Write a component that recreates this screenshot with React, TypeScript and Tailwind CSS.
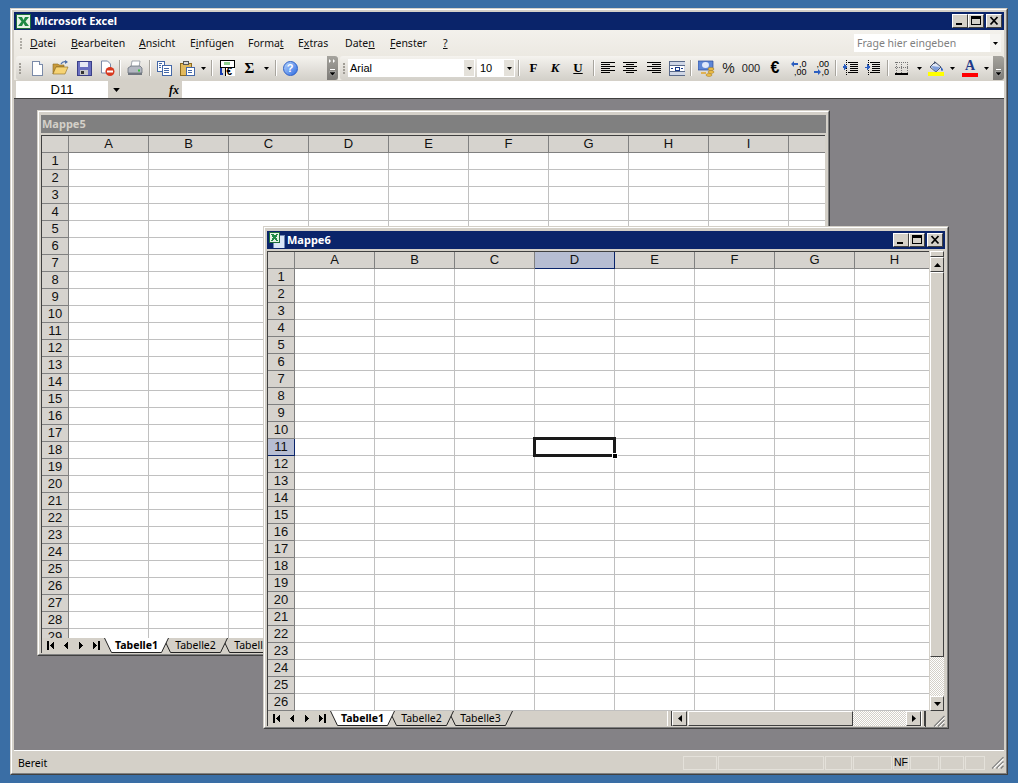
import React from 'react';

const ui = "font-['Noto_Sans','Liberation_Sans',sans-serif]";
const cellFont = "font-['Liberation_Sans',Arial,sans-serif]";
const raised = 'bg-[#d4d0c8] border border-t-white border-l-white border-r-[#404040] border-b-[#404040]';

const Arrow = ({ big }: { big?: boolean }) => (
    <svg width={big ? 7 : 5} height={big ? 4 : 3} viewBox="0 0 5 3"><path d="M0 0h5L2.5 3z" fill="#000" /></svg>
);

const Slot = ({ w, children }: { w: number; children?: React.ReactNode }) => (
    <div className="flex shrink-0 items-center justify-center" style={{ width: w }}>{children}</div>
);

const Sep = ({ w }: { w: number }) => (
    <Slot w={w}><div className="h-[16px] w-[2px] border-l border-l-[#a8a59e] border-r border-r-white" /></Slot>
);

const Grip = () => (
    <div className="flex w-[3px] flex-col gap-[1px]">
        {[0, 1, 2, 3].map(i => <div key={i} className="h-[2px] w-[2px] bg-[#a09d96]" />)}
    </div>
);

const Chevron = ({ double }: { double?: boolean }) => (
    <div className="flex h-[24px] w-[11px] flex-col items-center justify-between rounded-r-[3px] bg-gradient-to-b from-[#a5a39d] to-[#7d7b77] py-[3px]">
        <svg width="7" height="5" viewBox="0 0 7 5">{double && <path d="M0 0l2 2-2 2zM4 0l2 2-2 2z" fill="#fff" />}</svg>
        <svg width="7" height="8" viewBox="0 0 7 8"><path d="M1 0h5v1H1z" fill="#fff" /><path d="M0 3h7L3.5 7z" fill="#000" stroke="#fff" strokeWidth=".4" /></svg>
    </div>
);

// toolbar pictures, all drawn on a 16px box
const Ico = ({ children }: { children: React.ReactNode }) => (
    <svg width="16" height="16" viewBox="0 0 16 16" shapeRendering="crispEdges">{children}</svg>
);

const NewIcon = () => <Ico><path d="M3 1h7l3 3v11H3z" fill="#fff" stroke="#7a8aa8" /><path d="M10 1v3h3" fill="#dde3ee" stroke="#7a8aa8" /></Ico>;
const OpenIcon = () => (
    <svg width="17" height="16" viewBox="0 0 17 16">
        <path d="M1 4h5l1 1h5v2H4l-3 7z" fill="#c99a3a" stroke="#8c6a20" strokeWidth=".6" />
        <path d="M1 14l3-7h12l-3 7z" fill="#f6d374" stroke="#8c6a20" strokeWidth=".6" />
        <path d="M9 4c1-2 3-3 6-2" fill="none" stroke="#4f6fa8" strokeWidth="1.2" />
        <path d="M13 0l3 2-3 2z" fill="#4f6fa8" />
    </svg>
);
const SaveIcon = () => <Ico><path d="M1 1h14v14H1z" fill="#6a6fc0" stroke="#3a3f88" /><path d="M4 2h8v5H4z" fill="#e8eaf5" /><path d="M4 10h8v5H4z" fill="#c8c8c8" /><path d="M5 11h3v3H5z" fill="#333" /></Ico>;
const PermIcon = () => (
    <svg width="16" height="16" viewBox="0 0 16 16">
        <path d="M2.5 1h6l3 3v9h-9z" fill="#fff" stroke="#7a8aa8" />
        <circle cx="11" cy="11.500" r="4.500" fill="#d8391f" />
        <path d="M8 10.500h6v2H8z" fill="#fff" />
    </svg>
);
const PrintIcon = () => (
    <svg width="16" height="16" viewBox="0 0 16 16">
        <path d="M5 1h8l-1 6H4z" fill="#fff" stroke="#7f8794" strokeWidth=".7" />
        <path d="M1 8l3-2h9l2 2v5H1z" fill="#b4b8c2" stroke="#5d6470" strokeWidth=".7" />
        <path d="M1 13h14v2H1z" fill="#70767f" />
        <path d="M11 9.500h2v2h-2z" fill="#35c23a" />
    </svg>
);
const CopyIcon = () => (
    <Ico>
        <path d="M1 1h7v10H1z" fill="#fff" stroke="#4468a8" />
        <path d="M6 5h9v10H6z" fill="#fff" stroke="#4468a8" />
        <path d="M3 3h3M3 5h2M3 7h2M8 8h5M8 10h5M8 12h5" stroke="#4468a8" />
    </Ico>
);
const PasteIcon = () => (
    <Ico>
        <path d="M1 3h11v12H1z" fill="#e2b95c" stroke="#8c6a20" />
        <path d="M4 1h5v3H4z" fill="#d9d9d9" stroke="#555" />
        <path d="M7 7h8v8H7z" fill="#fff" stroke="#4468a8" />
        <path d="M9 10h4M9 12h4" stroke="#4468a8" />
    </Ico>
);
const EuroConvIcon = () => (
    <Ico>
        <path d="M1 0h14v7H1z" fill="#fff" stroke="#000" />
        <ellipse cx="8" cy="3.500" rx="3" ry="2" fill="#8fd08f" />
        <path d="M6 7h10v9H6z" fill="#fff" stroke="#000" />
        <text x="7.500" y="15" fontSize="10" fontWeight="bold" fontFamily="Liberation Sans" fill="#000">€</text>
        <path d="M2 8v6h2" fill="none" stroke="#1a3fb0" strokeWidth="1.500" />
    </Ico>
);
const HelpIcon = () => (
    <div className="flex h-[15px] w-[15px] items-center justify-center rounded-full border border-[#2a5fc8] bg-gradient-to-br from-[#b7d2fb] to-[#2f6be0] font-['Liberation_Sans',sans-serif] text-[11px] font-bold text-white">?</div>
);
const AlignIcon = ({ lines }: { lines: [number, number][] }) => (
    <Ico>{lines.map(([x, w], i) => <path key={i} d={`M${x} ${2 + i * 2}h${w}v1h-${w}z`} fill="#000" />)}</Ico>
);
const MergeIcon = () => (
    <Ico>
        <path d="M0 1h16v14H0z" fill="#cfd6e6" stroke="#5a6a8a" />
        <path d="M0 5h16M0 11h16" stroke="#5a6a8a" />
        <path d="M1 6h14v5H1z" fill="#fff" />
        <path d="M2 8h2M12 8h2M6 7h4v3H6z" stroke="#1a3a8a" fill="none" />
    </Ico>
);
const CurrencyIcon = () => (
    <svg width="17" height="17" viewBox="0 0 17 17">
        <path d="M0 1h15v9H0z" fill="#5d86d6" stroke="#2b4c9a" strokeWidth=".7" />
        <ellipse cx="7.500" cy="5" rx="3.500" ry="3" fill="#dfe8fb" />
        <ellipse cx="13" cy="9" rx="3" ry="1.400" fill="#f1c24a" stroke="#9a6e10" strokeWidth=".5" />
        <ellipse cx="13" cy="12" rx="3" ry="1.400" fill="#f1c24a" stroke="#9a6e10" strokeWidth=".5" />
        <ellipse cx="11" cy="15" rx="3" ry="1.400" fill="#f1c24a" stroke="#9a6e10" strokeWidth=".5" />
        <path d="M3 13h5" stroke="#e0a52a" strokeWidth="1.500" />
    </svg>
);
const Decimals = ({ up }: { up?: boolean }) => (
    <div className={`relative h-[16px] w-[16px] ${cellFont} text-[9px] leading-[8px] text-black`}>
        <div className="text-right">{up ? ',0' : ',00'}</div>
        <div className="text-right">{up ? ',00' : ',0'}</div>
        <svg className="absolute left-0 top-0" width="8" height="16" viewBox="0 0 8 16">
            <path d={up ? 'M0 4l3-3v2h4v2H3v2z' : 'M8 12l-3-3v2H1v2h4v2z'} fill="#2b5ec0" />
        </svg>
    </div>
);
const IndentIcon = ({ out }: { out?: boolean }) => (
    <Ico>
        <path d="M5 2h10M7 4h8M7 6h8M7 8h8M7 10h8M5 12h10" stroke="#000" />
        <path d="M3 0v15" stroke="#000" strokeDasharray="1 1" />
        <path d={out ? 'M5 7L1 4v2H0v2h1v2z' : 'M0 7h2V4l4 3-4 3V8H0z'} fill="#2b5ec0" />
    </Ico>
);
const BorderIcon = () => (
    <Ico>
        <path d="M1 2h13M1 7h13M2 2v12M7 2v12M13 2v12" stroke="#777" strokeDasharray="1 1" />
        <path d="M1 14h13" stroke="#000" strokeWidth="1.600" />
    </Ico>
);
const FillIcon = () => (
    <svg width="16" height="16" viewBox="0 0 16 16">
        <path d="M7 2l6 5-5 5-6-5z" fill="#dfe6f5" stroke="#44506a" />
        <path d="M6 1l2 2-2 1z" fill="#44506a" />
        <path d="M3 6l9 1-4 5z" fill="#7f9fdc" />
        <path d="M13 7c1 1 2 2 2 3s-2 1-2 0z" fill="#2f5fc0" />
        <path d="M0 12h16v4H0z" fill="#ffff00" />
    </svg>
);
const FontColorIcon = () => (
    <div className="flex w-[16px] flex-col items-center">
        <div className="h-[12px] font-['Liberation_Serif',serif] text-[14px] font-bold leading-[12px] text-[#1e3a8a]">A</div>
        <div className="mt-[1px] h-[4px] w-[16px] bg-[#ff0000]" />
    </div>
);

const ExcelBadge = () => (
    <svg width="15" height="15" viewBox="0 0 15 15" shapeRendering="crispEdges">
        <path d="M0 0h15v15H0z" fill="#1d6e3a" />
        <path d="M1 1h13v13H1z" fill="#e8f3e6" />
        <path d="M2 3h4l1.500 3L9 3h4l-3.500 4.500L13 12H9L7.500 9 6 12H2l3.500-4.500z" fill="#1f8a45" shapeRendering="auto" />
    </svg>
);

const Ul = ({ children }: { children: string }) => <span className="underline">{children}</span>;

const menu: [number, React.ReactNode][] = [
    [41, <><Ul>D</Ul>atei</>],
    [68, <><Ul>B</Ul>earbeiten</>],
    [51, <><Ul>A</Ul>nsicht</>],
    [58, <>E<Ul>i</Ul>nfügen</>],
    [50, <>Forma<Ul>t</Ul></>],
    [47, <>E<Ul>x</Ul>tras</>],
    [45, <>Date<Ul>n</Ul></>],
    [53, <><Ul>F</Ul>enster</>],
    [14, <Ul>?</Ul>],
];

const MenuBar = () => (
    <div className={`flex h-[26px] items-center bg-gradient-to-b from-[#f3f1ec] to-[#ece9e2] text-[10.5px] text-[#111] ${ui}`}>
        <div className="ml-[6px] mr-[7px] flex w-[3px] flex-col gap-[1px] opacity-80"><Grip /></div>
        {menu.map(([w, label], i) => <div key={i} className="shrink-0 pt-[2px]" style={{ width: w }}>{label}</div>)}
        <div className="flex-1" />
        <div className="mr-[3px] flex h-[18px] w-[147px] items-center bg-white pl-[3px] text-[#808080]">
            <span className="flex-1 pt-[1px]">Frage hier eingeben</span>
            <div className="flex h-full w-[11px] items-center justify-center bg-[#f6f5f2]"><Arrow /></div>
        </div>
    </div>
);

const Combo = ({ w, label, pad }: { w: number; label: string; pad: number }) => (
    <div className={`flex h-[18px] items-center bg-white ${cellFont} text-[11px] text-black`} style={{ width: w, paddingLeft: pad }}>
        <span className="flex-1">{label}</span>
        <div className="flex h-full w-[12px] items-center justify-center border border-white bg-[#e4e1da]"><Arrow /></div>
    </div>
);

const Serif = ({ children, className }: { children: string; className?: string }) => (
    <span className={`font-['Liberation_Serif',serif] text-[13px] font-bold text-black ${className ?? ''}`}>{children}</span>
);

const Toolbars = () => (
    <div className="flex h-[24px] bg-[#ece9e2]">
        <div className="ml-[2px] flex w-[322px] items-center rounded-l-[3px] bg-gradient-to-b from-[#f5f3ef] to-[#d3d0c9]">
            <div className="ml-[3px] mr-[3px]"><Grip /></div>
            <Slot w={23}><NewIcon /></Slot>
            <Slot w={24}><OpenIcon /></Slot>
            <Slot w={23}><SaveIcon /></Slot>
            <Slot w={23}><PermIcon /></Slot>
            <Sep w={4} />
            <Slot w={25}><PrintIcon /></Slot>
            <Sep w={5} />
            <Slot w={23}><CopyIcon /></Slot>
            <Slot w={24}><PasteIcon /></Slot>
            <Slot w={9}><Arrow /></Slot>
            <Sep w={8} />
            <Slot w={22}><EuroConvIcon /></Slot>
            <Slot w={23}><span className="font-['Liberation_Serif',serif] text-[15px] font-bold text-black">Σ</span></Slot>
            <Slot w={11}><Arrow /></Slot>
            <Sep w={8} />
            <Slot w={20}><HelpIcon /></Slot>
            <div className="flex-1" />
            <Chevron double />
        </div>
        <div className="ml-[2px] flex flex-1 items-center rounded-l-[3px] bg-gradient-to-b from-[#f5f3ef] to-[#d3d0c9]">
            <div className="ml-[3px] mr-[2px]"><Grip /></div>
            <Combo w={127} label="Arial" pad={2} />
            <div className="w-[2px]" />
            <Combo w={38} label="10" pad={3} />
            <Sep w={8} />
            <Slot w={21}><Serif>F</Serif></Slot>
            <Slot w={22}><Serif className="italic">K</Serif></Slot>
            <Slot w={24}><Serif className="underline">U</Serif></Slot>
            <Sep w={8} />
            <Slot w={19}><AlignIcon lines={[[1, 14], [1, 9], [1, 14], [1, 9], [1, 14], [1, 9]]} /></Slot>
            <Slot w={26}><AlignIcon lines={[[1, 14], [4, 8], [1, 14], [4, 8], [1, 14], [4, 8]]} /></Slot>
            <Slot w={22}><AlignIcon lines={[[1, 14], [6, 9], [1, 14], [6, 9], [1, 14], [6, 9]]} /></Slot>
            <Slot w={23}><MergeIcon /></Slot>
            <Sep w={6} />
            <Slot w={24}><CurrencyIcon /></Slot>
            <Slot w={21}><span className={`${cellFont} text-[14px] text-[#222]`}>%</span></Slot>
            <Slot w={24}><span className={`${cellFont} text-[11px] text-[#222]`}>000</span></Slot>
            <Slot w={24}><span className={`${cellFont} text-[16px] font-bold text-black`}>€</span></Slot>
            <Slot w={23}><Decimals up /></Slot>
            <Slot w={22}><Decimals /></Slot>
            <Sep w={8} />
            <Slot w={21}><IndentIcon out /></Slot>
            <Slot w={23}><IndentIcon /></Slot>
            <Sep w={8} />
            <Slot w={20}><BorderIcon /></Slot>
            <Slot w={14}><Arrow /></Slot>
            <Slot w={20}><FillIcon /></Slot>
            <Slot w={12}><Arrow /></Slot>
            <Slot w={24}><FontColorIcon /></Slot>
            <Slot w={8}><Arrow /></Slot>
            <div className="flex-1" />
            <Chevron />
        </div>
    </div>
);

const FormulaBar = () => (
    <div className={`mt-[1px] flex h-[17px] items-stretch bg-[#d4d0c8] ${cellFont} text-[13px] text-black`}>
        <div className="ml-[2px] flex w-[92px] items-center justify-center bg-white">D11</div>
        <div className="flex w-[16px] items-center justify-center"><Arrow big /></div>
        <div className="flex w-[58px] items-center justify-end pr-[3px] font-['Liberation_Serif',serif] text-[12px] font-bold italic">fx</div>
        <div className="flex-1 bg-white" />
    </div>
);

const WinBtn = ({ kind }: { kind: 'min' | 'max' | 'close' }) => (
    <div className={`${raised} h-[14px] w-[16px]`}>
        <svg width="14" height="12" viewBox="0 0 14 12" shapeRendering="crispEdges">
            {kind === 'min' && <path d="M3 8h6v2H3z" fill="#000" />}
            {kind === 'max' && <path d="M2.500 1.500h9v8h-9zM3 2h8v1H3z" fill="none" stroke="#000" />}
            {kind === 'close' && <path d="M3.500 2l7 7.500m0-7.500l-7 7.500" stroke="#000" strokeWidth="1.800" shapeRendering="auto" />}
        </svg>
    </div>
);

const Frame = ({ children, className }: { children: React.ReactNode; className: string }) => (
    <div className={`absolute border border-t-[#d4d0c8] border-l-[#d4d0c8] border-r-[#404040] border-b-[#404040] ${className}`}>
        <div className="flex h-full flex-col border border-t-white border-l-white border-r-[#808080] border-b-[#808080] bg-[#d4d0c8] px-[2px] pt-[3px]">
            {children}
        </div>
    </div>
);

const GRID = 'border-[#c0c0c0]';
const HEAD = 'bg-[#d6d3ce]';

const Sheet = ({ cols, rows, activeCol, activeRow }: { cols: string[]; rows: number; activeCol?: string; activeRow?: number }) => (
    <div className={`relative flex-1 overflow-hidden border-l border-t border-[#404040] bg-white ${cellFont} text-[13px] text-[#111]`}>
        <div className="flex h-[17px]">
            <div className={`h-full w-[27px] shrink-0 border-b border-r border-[#808080] ${HEAD}`} />
            {cols.map((c, i) => (
                <div key={i} className={`flex h-full w-[80px] shrink-0 items-center justify-center border-b border-r border-[#808080] ${c === activeCol ? 'border-b-[#0a246a] border-r-[#0a246a] bg-[#b6bdd2]' : HEAD}`}>{c}</div>
            ))}
        </div>
        {Array.from({ length: rows }, (_, r) => (
            <div key={r} className="flex h-[17px]">
                <div className={`flex h-full w-[27px] shrink-0 items-center justify-center border-b border-r border-[#808080] ${r + 1 === activeRow ? 'border-b-[#0a246a] border-r-[#0a246a] bg-[#b6bdd2]' : HEAD}`}>{r + 1}</div>
                {cols.map((_, i) => <div key={i} className={`h-full w-[80px] shrink-0 border-b border-r ${GRID}`} />)}
            </div>
        ))}
        {activeCol && (
            <div className="absolute left-[265px] top-[185px] h-[20px] w-[83px] border-[3px] border-[#1a1a1a]">
                <div className="absolute bottom-[-5px] right-[-5px] h-[6px] w-[6px] border border-white bg-black" />
            </div>
        )}
    </div>
);

const Nav = ({ d }: { d: string }) => (
    <div className="flex w-[15px] justify-center">
        <svg width="8" height="9" viewBox="0 0 8 9" shapeRendering="crispEdges"><path d={d} fill="#000" /></svg>
    </div>
);

const Tab = ({ label, active, z }: { label: string; active?: boolean; z: string }) => (
    <div className={`relative -mr-[6px] h-[15px] w-[65px] shrink-0 ${z}`}>
        <svg className="absolute left-0 top-0" width="65" height="15" viewBox="0 0 65 15">
            <path d="M.5 0l7 14.500h50l7-14.500z" fill={active ? '#fff' : '#d4d0c8'} />
            <path d="M.5 0l7 14.500h50l7-14.500" fill="none" stroke="#222" strokeWidth="1" />
        </svg>
        <div className={`relative flex h-[15px] items-center justify-center ${ui} text-[10.5px] text-black ${active ? 'font-bold' : ''}`}>{label}</div>
    </div>
);

const TabStrip = () => (
    <div className="flex shrink-0 items-start overflow-hidden">
        <div className="flex h-[15px] w-[63px] shrink-0 items-center border-l border-[#404040] pl-[1px]">
            <Nav d="M0 0h2v9H0zM7 0v9L3 4.500z" />
            <Nav d="M6 0v9L2 4.500z" />
            <Nav d="M2 0v9l4-4.500z" />
            <Nav d="M8 0H6v9h2zM1 0v9l4-4.500z" />
        </div>
        <Tab label="Tabelle1" active z="z-20" />
        <Tab label="Tabelle2" z="z-10" />
        <Tab label="Tabelle3" z="z-0" />
    </div>
);

const hatch = 'bg-[repeating-conic-gradient(#d4d0c8_0_25%,#ffffff_0_50%)] bg-size-[2px_2px]';

const VScroll = () => (
    <div className="flex w-[16px] shrink-0 flex-col items-start pl-[1px]">
        <div className={`${raised} h-[6px] w-[14px]`} />
        <div className={`${raised} flex h-[15px] w-[14px] items-center justify-center`}>
            <svg width="7" height="4" viewBox="0 0 7 4"><path d="M0 4h7L3.500 0z" fill="#000" /></svg>
        </div>
        <div className={`${raised} h-[385px] w-[14px]`} />
        <div className={`${hatch} w-[14px] flex-1`} />
        <div className={`${raised} flex h-[15px] w-[14px] items-center justify-center`}>
            <svg width="7" height="4" viewBox="0 0 7 4"><path d="M0 0h7L3.500 4z" fill="#000" /></svg>
        </div>
    </div>
);

const HScroll = () => (
    <div className="flex h-[15px] w-[258px] shrink-0 items-stretch">
        <div className="w-[5px] border-r border-[#404040] border-l border-l-white" />
        <div className={`${raised} flex w-[15px] items-center justify-center`}>
            <svg width="4" height="7" viewBox="0 0 4 7"><path d="M4 0v7L0 3.500z" fill="#000" /></svg>
        </div>
        <div className={`${raised} ml-[1px] w-[165px]`} />
        <div className={`${hatch} flex-1`} />
        <div className={`${raised} flex w-[15px] items-center justify-center`}>
            <svg width="4" height="7" viewBox="0 0 4 7"><path d="M0 0v7l4-3.500z" fill="#000" /></svg>
        </div>
        <div className="w-[4px] border-r border-[#404040] border-l border-l-white" />
    </div>
);

const SizeGrip = ({ size }: { size: number }) => (
    <svg width={size} height={size} viewBox="0 0 13 13">
        <path d="M12.500 2L2 12.500M12.500 6L6 12.500M12.500 10L10 12.500" stroke="#808080" strokeWidth="1.200" />
        <path d="M12.500 3.500L3.500 12.500M12.500 7.500L7.500 12.500" stroke="#fff" strokeWidth="1" />
    </svg>
);

const Title = ({ active, children }: { active?: boolean; children: React.ReactNode }) => (
    <div className={`flex h-[18px] shrink-0 items-center ${active ? 'bg-[#0a246a] text-white' : 'bg-[#808080] text-[#d4d0c8]'} ${ui} text-[11px] font-bold`}>
        {children}
    </div>
);

const Mappe5 = () => (
    <Frame className="left-[23px] top-[11px] h-[546px] w-[793px]">
        <Title><span className="ml-[1px]">Mappe5</span></Title>
        <div className="mr-[1px] mt-[2px] flex min-h-0 flex-1 flex-col">
            <Sheet cols={['A', 'B', 'C', 'D', 'E', 'F', 'G', 'H', 'I', '']} rows={29} />
            <div className="h-[16px] shrink-0 bg-[#d4d0c8]"><TabStrip /></div>
        </div>
    </Frame>
);

const Mappe6 = () => (
    <Frame className="left-[249px] top-[127px] h-[503px] w-[686px]">
        <Title active>
            <div className="ml-[1px] mr-[2px]">
                <svg width="17" height="16" viewBox="0 0 17 16" shapeRendering="crispEdges">
                    <path d="M5 3h11v13H5z" fill="#dbe6f7" stroke="#6f88b5" />
                    <path d="M1 0h11v11H1z" fill="#1d6e3a" />
                    <path d="M2 1h9v9H2z" fill="#e8f3e6" />
                    <path d="M3 2h3l1 2 1-2h2L8 5.500 10 9H8L6.500 7 5 9H3l2-3.500z" fill="#1f8a45" />
                </svg>
            </div>
            <span className="flex-1">Mappe6</span>
            <div className="mr-[2px] flex"><WinBtn kind="min" /><WinBtn kind="max" /><div className="w-[2px]" /><WinBtn kind="close" /></div>
        </Title>
        <div className="mt-[2px] flex min-h-0 flex-1">
            <Sheet cols={['A', 'B', 'C', 'D', 'E', 'F', 'G', 'H', '']} rows={26} activeCol="D" activeRow={11} />
            <VScroll />
        </div>
        <div className="flex h-[16px] shrink-0 bg-[#d4d0c8]">
            <div className="min-w-0 flex-1"><TabStrip /></div>
            <HScroll />
            <div className="flex w-[20px] shrink-0 items-end justify-end border-l border-[#404040]"><SizeGrip size={13} /></div>
        </div>
    </Frame>
);

const panels = [34, 106, 27, 39, 16, 29, 24, 20];

const StatusBar = () => (
    <div className={`flex h-[22px] shrink-0 items-center bg-[#d4d0c8] ${ui} text-[10.5px] text-black`}>
        <span className="ml-[4px] w-[665px] shrink-0 pt-[3px]">Bereit</span>
        <div className="mt-[2px] flex h-[14px] gap-[1px]">
            {panels.map((w, i) => (
                <div key={i} className={`flex items-center justify-center border border-[#e4e1da] ${cellFont}`} style={{ width: w }}>{i === 4 ? 'NF' : ''}</div>
            ))}
        </div>
        <div className="flex-1" />
        <SizeGrip size={14} />
    </div>
);

export default function App() {
    return (
        <div className="h-[783px] w-[1018px] overflow-hidden bg-[#3a6ea5] pl-[10px] pt-[8px]">
            <div className="h-[767px] w-[998px] border border-t-[#d4d0c8] border-l-[#d4d0c8] border-r-[#404040] border-b-[#404040]">
                <div className="flex h-full flex-col border border-t-white border-l-white border-r-[#808080] border-b-[#808080] bg-[#d4d0c8] px-[2px] pt-[2px]">
                    <div className={`flex h-[18px] shrink-0 items-center bg-[#0a246a] text-white ${ui} text-[11px] font-bold`}>
                        <div className="ml-[2px] mr-[3px]"><ExcelBadge /></div>
                        <span className="flex-1">Microsoft Excel</span>
                        <div className="mr-[2px] flex"><WinBtn kind="min" /><WinBtn kind="max" /><div className="w-[2px]" /><WinBtn kind="close" /></div>
                    </div>
                    <MenuBar />
                    <Toolbars />
                    <FormulaBar />
                    <div className="relative min-h-0 flex-1 overflow-hidden border-t border-[#404040] bg-[#848286]">
                        <Mappe5 />
                        <Mappe6 />
                    </div>
                    <div className="h-[1px] shrink-0 bg-white" />
                    <StatusBar />
                </div>
            </div>
        </div>
    );
}
